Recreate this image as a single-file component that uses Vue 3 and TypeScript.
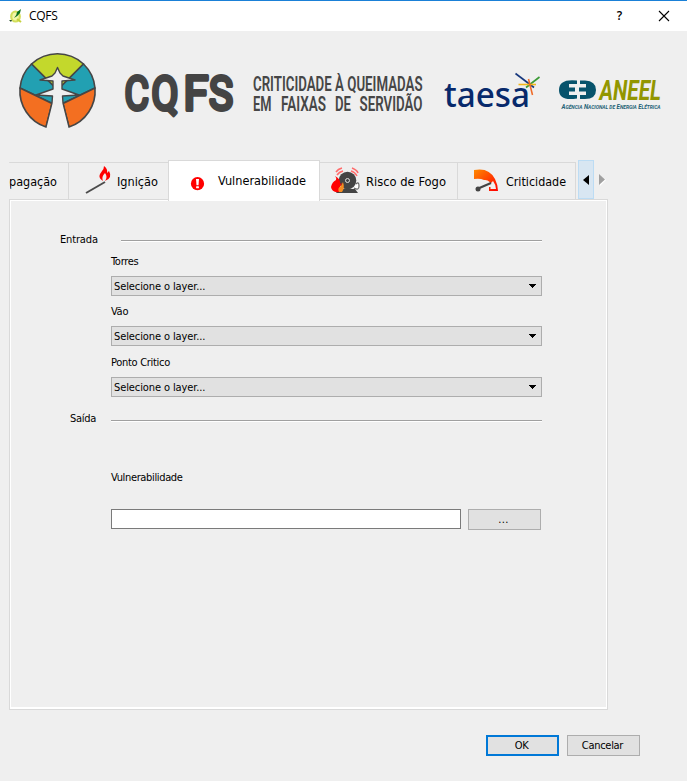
<script setup lang="ts">
import { ref } from 'vue'

interface Tab {
  id: string
  label: string
  textWidth: number
}

const tabs: Tab[] = [
  { id: 'propagacao', label: 'pagação', textWidth: 48 },
  { id: 'ignicao', label: 'Ignição', textWidth: 41 },
  { id: 'vulnerabilidade', label: 'Vulnerabilidade', textWidth: 88 },
  { id: 'risco', label: 'Risco de Fogo', textWidth: 80 },
  { id: 'criticidade', label: 'Criticidade', textWidth: 60 },
]
const layers = ['Torres', 'Vão', 'Ponto Critico']
const active = ref('vulnerabilidade')
const output = ref('')
</script>

<template>
  <div class="window">
    <div class="titlebar">
      <svg class="app-icon" width="14" height="16" viewBox="0 0 14 16">
        <ellipse cx="6.5" cy="8.5" rx="4.3" ry="5" fill="#f3f7a8" stroke="#d3df5c" stroke-width="2.2" />
        <path d="M8 11l4 3" stroke="#c5d13c" stroke-width="2" />
        <path d="M5 10Q8 7 8 4L12 1L11 5Q8 9 5 10" fill="#08701f" />
        <path d="M0 12l3 0-1 2z" fill="#234b28" />
      </svg>
      <span class="title">CQFS</span>
      <span class="help">?</span>
      <svg class="close" width="12" height="12" viewBox="0 0 12 12"><path d="M1 1l10 10M11 1L1 11" stroke="#000" stroke-width="1.1" /></svg>
    </div>

    <header class="brands">
      <svg class="emblem" width="80" height="80" viewBox="18 51 80 80" stroke="#464646" stroke-width="1.6" stroke-linejoin="round">
        <path d="M31.5 64A38 38 0 0 1 83.5 64L57.5 90Z" fill="#c3d82c" />
        <path d="M31.5 64A38 38 0 0 0 20 88L57.5 106V90Z" fill="#22a0b2" />
        <path d="M83.5 64A38 38 0 0 1 95 88L57.5 106V90Z" fill="#22a0b2" />
        <path d="M20 88A38 38 0 0 0 46 127L52 103.5Z" fill="#f36f21" />
        <path d="M95 88A38 38 0 0 1 69 127L63 103.5Z" fill="#f36f21" />
        <path d="M46 127L52 103L52.5 96L36 95L53 89V81L40 80L52 76L55 73L57.5 67.5L60 73L63 76L75 80L62 81V89L79 95L62.5 96L63 103L69 127" fill="#efefef" stroke-width="1.4" />
      </svg>
      <svg class="wordmark" width="112" height="46" viewBox="122 69 112 46">
        <g class="cqfs">
          <text x="124.5" y="109.7" textLength="24.5" lengthAdjust="spacingAndGlyphs">C</text>
          <text x="151.5" y="109.7" textLength="27" lengthAdjust="spacingAndGlyphs">Q</text>
          <text x="183.5" y="109.7" textLength="25" lengthAdjust="spacingAndGlyphs">F</text>
          <text x="209" y="109.7" textLength="24" lengthAdjust="spacingAndGlyphs">S</text>
        </g>
      </svg>
      <svg class="slogan" width="174" height="48" viewBox="251 69 174 48">
        <text x="253" y="90.5" textLength="169.5" lengthAdjust="spacingAndGlyphs">CRITICIDADE À QUEIMADAS</text>
        <text x="253" y="111" textLength="18.5" lengthAdjust="spacingAndGlyphs">EM</text>
        <text x="281" y="111" textLength="45" lengthAdjust="spacingAndGlyphs">FAIXAS</text>
        <text x="335" y="111" textLength="16" lengthAdjust="spacingAndGlyphs">DE</text>
        <text x="359.5" y="111" textLength="63" lengthAdjust="spacingAndGlyphs">SERVIDÃO</text>
      </svg>
      <svg class="taesa" width="100" height="46" viewBox="442 69 100 46">
        <text x="444" y="106.5" textLength="86" lengthAdjust="spacingAndGlyphs">taesa</text>
        <g fill="none" stroke-width="1.6">
          <path d="M515.5 73.5L534 87.5" stroke="#17387e" />
          <path d="M526 87.5L539.5 77" stroke="#3b9a36" />
          <path d="M518.5 84.5H536" stroke="#f3b71b" />
          <path d="M528.5 79L532.5 95" stroke="#ef6a27" />
        </g>
      </svg>
      <svg class="aneel" width="106" height="36" viewBox="557 77 106 36">
        <path d="M577 80.5Q559 78.5 559 90Q559 101.5 577 98.5V95H569V91.5H575V87.5H569V84H577Z" fill="#07536c" />
        <path d="M580 80.5H585Q596 81 596 90Q596 99 585 99H580V95H586V91.5H579V87.5H586V84H580Z" fill="#07536c" />
        <text class="aneel-name" x="599.5" y="99.8" textLength="61.5" lengthAdjust="spacingAndGlyphs">ANEEL</text>
        <text class="aneel-sub" x="561.5" y="108.7" textLength="99" lengthAdjust="spacingAndGlyphs">A<tspan class="sc">GÊNCIA</tspan> N<tspan class="sc">ACIONAL DE</tspan> E<tspan class="sc">NERGIA</tspan> E<tspan class="sc">LÉTRICA</tspan></text>
      </svg>
    </header>

    <nav class="tabs">
      <button v-for="tab in tabs" :key="tab.id" class="tab" :class="[tab.id, { active: active === tab.id }]" @click="active = tab.id">
        <svg v-if="tab.id === 'ignicao'" class="icon" width="26" height="28" viewBox="0 0 26 28">
          <path d="M1 27L20 16" stroke="#4c4c4c" stroke-width="2" />
          <path fill-rule="evenodd" d="M18 15C12 11 15 8 17 5Q19 3 19 0Q23 3 22 7L24 5Q28 12 20 15Q23 11 20 7Q16 11 18 15Z" fill="#f00" />
        </svg>
        <svg v-else-if="tab.id === 'vulnerabilidade'" class="icon" width="14" height="14" viewBox="0 0 14 14">
          <circle cx="6.5" cy="6.7" r="6.6" fill="#f00" /><path d="M5 2h3L7.5 8.2H5.5z" fill="#fff" /><rect x="5.1" y="9.2" width="2.8" height="2" rx=".5" fill="#fff" />
        </svg>
        <svg v-else-if="tab.id === 'risco'" class="icon" width="29" height="26" viewBox="0 0 29 26">
          <path d="M8 21H24L27 25H5Z" fill="#444" /><circle cx="16.5" cy="12.5" r="8.8" fill="#444" />
          <circle cx="16.5" cy="12.5" r="2" fill="none" stroke="#ddd" stroke-width="1" />
          <path d="M25 16Q28 13 28 18Q28 23 23 20" stroke="#666" stroke-width="1.2" fill="#fff" />
          <path d="M6 7Q8 4 12 3M5 4Q7 1 11 0M20 3Q24 4 26 8M21 0Q26 2 27 5" fill="none" stroke="#ff6b6b" stroke-width="1.5" />
          <path d="M4 8Q10 11 9 16L11 15Q8 19 8 24Q1 25 0 19Q1 14 5 12Q6 10 4 8Z" fill="#f00" />
          <path d="M12 14Q14 20 11 24H8Q6 20 10 18Z" fill="#f68b1f" />
        </svg>
        <svg v-else-if="tab.id === 'criticidade'" class="icon" width="25" height="24" viewBox="0 0 25 24">
          <defs><linearGradient id="gauge" x2="1" y2="1"><stop stop-color="#ff8a00" /><stop offset="1" stop-color="#f00" /></linearGradient></defs>
          <path d="M0 1Q15-2 21 10Q24 16 24 22H15V18H18Q16 10 10 11Q6 9 0 10Z" fill="url(#gauge)" />
          <path d="M16 15L19 12Q22 16 22 20H16.5V17Z" fill="#efefef" />
          <path d="M3 20L17 14" stroke="#444" stroke-width="2.2" /><circle cx="4" cy="20" r="2.5" fill="#444" />
        </svg>
        <svg class="tab-label" :width="tab.textWidth" height="20"><text x="0" y="15" :textLength="tab.textWidth" lengthAdjust="spacingAndGlyphs">{{ tab.label }}</text></svg>
      </button>
      <button class="scroll"><svg width="6" height="10" viewBox="0 0 6 10"><path d="M6 0V10L0 5Z" /></svg></button>
      <svg class="scroll-next" width="7" height="12" viewBox="0 0 7 12"><path d="M1 1V12L7 6Z" fill="#fff" /><path d="M0 0V11L6 5.5Z" fill="#a0a0a0" /></svg>
    </nav>

    <main class="panel">
      <div class="section entrada"><span>Entrada</span><i class="rule" /></div>
      <div v-for="name in layers" :key="name" class="field">
        <label>{{ name }}</label>
        <button class="combo"><span>Selecione o layer...</span><svg width="7" height="4" viewBox="0 0 7 4" shape-rendering="crispEdges"><path d="M0 0H7V1H6V2H5V3H4V4H3V3H2V2H1V1H0Z" /></svg></button>
      </div>
      <div class="section saida"><span>Saída</span><i class="rule" /></div>
      <label class="output-label">Vulnerabilidade</label>
      <div class="output"><input v-model="output" type="text"><button class="btn dots">...</button></div>
    </main>

    <footer class="actions"><button class="btn primary">OK</button><button class="btn">Cancelar</button></footer>
  </div>
</template>

<style>
body { margin: 0; background: #efefef; }
</style>

<style scoped>
* { box-sizing: border-box; }
.window { width: 687px; height: 781px; background: #efefef; overflow: hidden; color: #000; font: 11px "DejaVu Sans Condensed", "DejaVu Sans", sans-serif; font-stretch: condensed; letter-spacing: -.3px; }
button, input { font: inherit; letter-spacing: inherit; color: inherit; margin: 0; padding: 0; border-radius: 0; }
svg { display: block; flex: none; overflow: visible; }
.titlebar { height: 31px; border-top: 1px solid #1a80d7; background: #fff; display: flex; align-items: center; padding: 0 17px 1px 9px; }
.title { margin-left: 6px; font: 12px "Open Sans", sans-serif; letter-spacing: -.3px; }
.help { margin-left: auto; margin-right: 36px; font: 600 12px "Open Sans", sans-serif; }
.brands { height: 129px; display: flex; align-items: flex-start; padding-left: 18px; }
.emblem { margin-top: 20px; }
.wordmark { margin: 38px 0 0 24px; }
.cqfs text { font: 400 49px Roboto, sans-serif; fill: #444; stroke: #444; stroke-width: 4px; stroke-linejoin: round; letter-spacing: 0; }
.slogan { margin: 38px 0 0 17px; }
.slogan text { font: 600 20px Roboto, sans-serif; fill: #464646; letter-spacing: 0; }
.taesa { margin: 38px 0 0 17px; }
.taesa text { font: 500 34px "Noto Sans", sans-serif; fill: #07296b; letter-spacing: 0; }
.aneel { margin: 46px 0 0 15px; }
.aneel-name { font: italic 700 27px Roboto, sans-serif; fill: #929600; letter-spacing: 0; }
.aneel-sub { font: italic 700 6.6px Roboto, sans-serif; fill: #226175; letter-spacing: 0; }
.sc { font-size: 5.3px; }
.tabs { height: 39px; display: flex; align-items: flex-end; padding-left: 9px; }
.tab { height: 37px; flex: none; display: flex; align-items: center; border: 1px solid #d9d9d9; border-width: 1px 1px 0 0; background: #efefef; position: relative; }
.tab-label text { font: 12.3px "DejaVu Sans Condensed", "DejaVu Sans", sans-serif; font-stretch: condensed; letter-spacing: 0; }
.propagacao { width: 60px; clip-path: polygon(0 0, 3px 10px, 0 20px, 2px 30px, 0 37px, 100% 37px, 100% 0); }
.ignicao { width: 99px; padding-left: 16px; border-right: 0; }
.ignicao .icon { margin-top: -2px; }
.ignicao .tab-label { margin-left: 6px; }
.active { width: 152px; height: 41px; margin-bottom: -2px; border-left-width: 1px; background: #fff; z-index: 1; padding-left: 22px; }
.active .icon { margin-top: 5px; }
.active .tab-label { margin: -2px 0 0 13px; }
.risco { width: 138px; padding-left: 11px; }
.risco .icon { margin-top: -1px; }
.risco .tab-label { margin-left: 6px; }
.criticidade { width: 118px; padding-left: 16px; }
.criticidade .icon { margin-top: -1px; }
.criticidade .tab-label { margin-left: 7px; }
.scroll { width: 16px; height: 39px; margin-left: 2px; display: grid; place-items: center; border: 1px solid #bcdcf4; background: #d8e6f2; }
.scroll-next { margin: 0 0 13px 5px; }
.panel { width: 599px; height: 511px; margin-left: 9px; border: 1px solid #d9d9d9; box-shadow: inset 1px 1px #fff, inset -1px -2px #fff; padding: 32px 65px 0 101px; }
.section { display: flex; align-items: center; height: 16px; }
.section span { line-height: 16px; }
.entrada { margin-left: -51px; }
.entrada span { letter-spacing: -.15px; }
.rule { height: 2px; margin-left: auto; background: linear-gradient(#a0a0a0 50%, #fff 50%); }
.entrada .rule { margin-top: 1px; width: 421px; }
.saida { margin: 14px 0 0 -41px; }
.saida .rule { margin-top: 4px; width: 431px; }
.field { display: flex; flex-direction: column; }
.field label { height: 15px; line-height: 15px; margin: 6px 0 7px; }
.field + .field label { margin: 8px 0 7px; }
.field:nth-child(4) label { margin-top: 9px; }
.combo { width: 431px; height: 20px; display: flex; align-items: center; justify-content: space-between; border: 1px solid #adadad; background: #e1e1e1; padding: 0 5px 0 2px; letter-spacing: -.1px; }
.output-label { display: block; margin-top: 43px; height: 16px; line-height: 16px; letter-spacing: -.35px; }
.output { margin-top: 23px; display: flex; gap: 7px; }
.output input { width: 350px; height: 20px; border: 1px solid #7a7a7a; background: #fff; outline: 0; }
.btn { width: 73px; height: 21px; border: 1px solid #adadad; background: #e1e1e1; display: grid; place-items: center; }
.dots { letter-spacing: .4px; padding-right: 2px; }
.actions { display: flex; gap: 8px; margin: 25px 47px 0 0; justify-content: flex-end; }
.actions .btn { padding-right: 2px; }
.primary { border: 2px solid #0078d7; }
</style>
